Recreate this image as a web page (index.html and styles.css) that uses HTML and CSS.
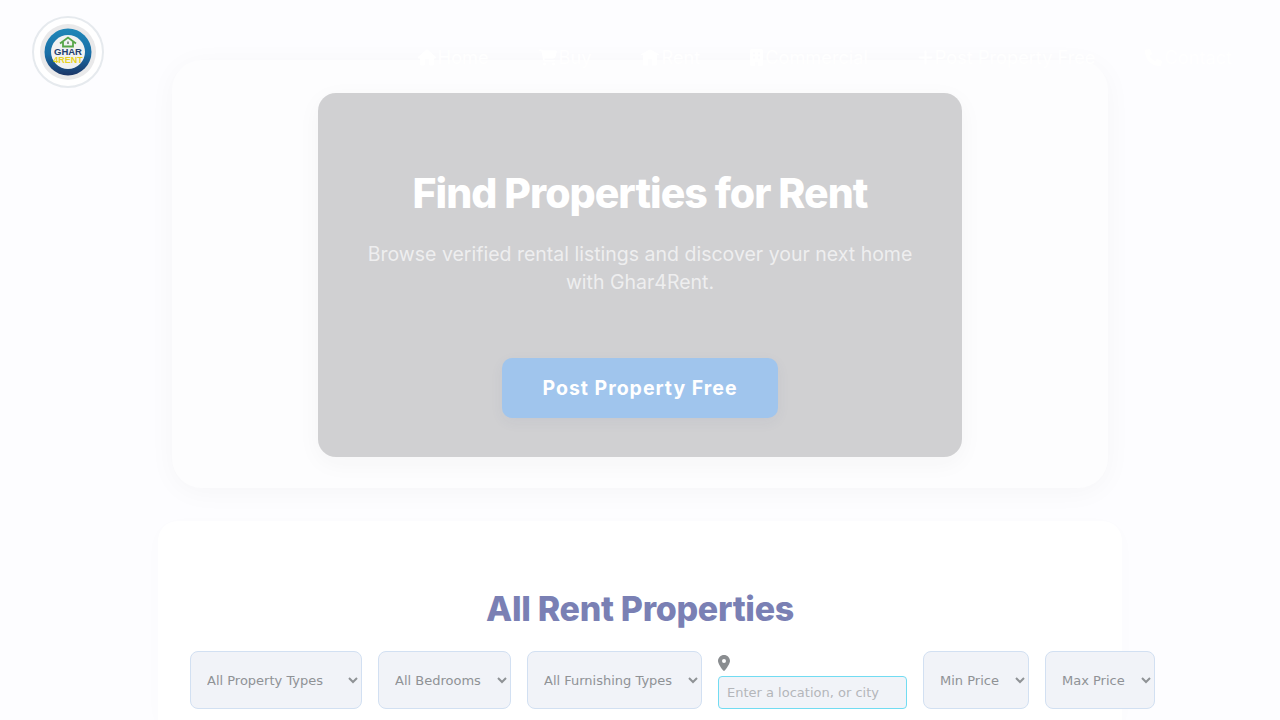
FILE: index.html
```html
<!DOCTYPE html>
<html lang="en">

<head>
    <meta charset="UTF-8">
    <meta name="viewport" content="width=device-width, initial-scale=1.0">
    <title>Ghar4Rent</title>
    <link rel="stylesheet" href="styles.css">
</head>

<body>
    <header class="header">
        <a class="logo" href="#">
            <svg width="72" height="72" viewBox="0 0 72 72">
                <defs>
                    <linearGradient id="ring" x1="0" y1="0" x2="0" y2="1">
                        <stop offset="0" stop-color="#1f87b8" />
                        <stop offset="0.55" stop-color="#1a6ea6" />
                        <stop offset="1" stop-color="#1b3566" />
                    </linearGradient>
                </defs>
                <circle cx="36" cy="36" r="35" fill="#fff" stroke="#e6eaee" stroke-width="2" />
                <circle cx="36" cy="36" r="28" fill="#e9e9ea" />
                <circle cx="36" cy="36" r="23.500" fill="url(#ring)" />
                <circle cx="36" cy="36" r="17" fill="#f1f2f2" />
                <path d="M28 27.500 36 21.500 44 27.500M31 26V30.500H41V26" fill="none" stroke="#56a548" stroke-width="1.800" />
                <rect x="35" y="25.500" width="2" height="2.500" fill="#8a9a8c" />
                <text x="36" y="39" class="logo-top">GHAR</text>
                <text x="36" y="46.500" class="logo-bottom">4RENT</text>
            </svg>
        </a>
        <nav class="nav">
            <a href="#">
                <svg width="18" height="17" viewBox="0 0 576 512"><path d="M575.800 255.500c0 18-15 32.100-32 32.100h-32l.7 160.200c0 2.700-.2 5.400-.5 8.100V472c0 22.100-17.900 40-40 40H392c-22.100 0-40-17.900-40-40V352c0-17.700-14.300-32-32-32h-64c-17.700 0-32 14.300-32 32v120c0 22.100-17.900 40-40 40H104c-22.100 0-40-17.900-40-40V287.600H32c-18 0-32-14-32-32.100 0-9 3-17 10-24L266.400 8c7-7 15-8 22-8s15 2 21 7l255.400 224.500c8 7 12 15 11 24z" /></svg>
                Home
            </a>
            <a href="#">
                <svg width="18" height="17" viewBox="0 0 576 512"><path d="M0 24C0 10.700 10.700 0 24 0h45.500c22 0 41.500 12.800 50.600 32h411c26.300 0 45.500 25 38.600 50.400l-41 152.300c-8.500 31.400-37 53.300-69.500 53.300H170.700l5.400 28.500c2.200 11.300 12.100 19.500 23.600 19.500H488c13.300 0 24 10.700 24 24s-10.700 24-24 24H199.700c-34.600 0-64.300-24.600-70.700-58.500L77.400 54.500c-.7-3.800-4-6.500-7.900-6.500H24C10.700 48 0 37.300 0 24zm128 440a48 48 0 1 1 96 0 48 48 0 1 1-96 0zm336-48a48 48 0 1 1 0 96 48 48 0 1 1 0-96z" /></svg>
                Buy
            </a>
            <a href="#">
                <svg width="18" height="17" viewBox="0 0 576 512"><path d="M280.400 3.100a16 16 0 0 1 15.200 0l272 144c7.800 4.100 10.800 13.800 6.700 21.600-2.900 5.400-8.400 8.500-14.300 8.500H512V480c0 17.700-14.300 32-32 32H352V352c0-17.700-14.300-32-32-32h-64c-17.700 0-32 14.300-32 32v160H96c-17.700 0-32-14.300-32-32V177.200H16c-5.900 0-11.400-3.100-14.300-8.500-4.100-7.800-1.100-17.500 6.700-21.600z" /></svg>
                Rent
            </a>
            <a href="#">
                <svg width="13" height="17" viewBox="0 0 384 512"><path d="M48 0C21.500 0 0 21.500 0 48v416c0 26.500 21.500 48 48 48h96v-80c0-26.500 21.500-48 48-48s48 21.500 48 48v80h96c26.500 0 48-21.500 48-48V48c0-26.500-21.500-48-48-48zm40 96h64v64H88zm144 0h64v64h-64zM88 224h64v64H88zm144 0h64v64h-64z" /></svg>
                Commercial
            </a>
            <a href="#">
                <svg width="15" height="17" viewBox="0 0 448 512"><path d="M256 80c0-17.700-14.300-32-32-32s-32 14.300-32 32v144H48c-17.700 0-32 14.300-32 32s14.300 32 32 32h144v144c0 17.700 14.300 32 32 32s32-14.300 32-32V288h144c17.700 0 32-14.300 32-32s-14.300-32-32-32H256z" /></svg>
                Post Property Free
            </a>
            <a href="#">
                <svg width="17" height="17" viewBox="0 0 512 512"><path d="M164.900 24.600c-7.700-18.600-28-28.500-47.400-23.200l-88 24C12.100 30.200 0 46 0 64c0 247.400 200.600 448 448 448 18 0 33.800-12.100 38.600-29.500l24-88c5.300-19.400-4.600-39.700-23.200-47.400l-96-40c-16.300-6.800-35.200-2.100-46.300 11.600L304.700 368C234.300 334.700 177.300 277.700 144 207.300l49.300-40.300c13.700-11.200 18.400-30 11.600-46.300z" /></svg>
                Contact
            </a>
        </nav>
    </header>

    <main class="page">
        <section class="hero">
            <div class="hero-box">
                <h1>Find Properties for Rent</h1>
                <p>Browse verified rental listings and discover your next home with Ghar4Rent.</p>
                <a class="post-btn" href="#">Post Property Free</a>
            </div>
        </section>

        <section class="listing">
            <h2>All Rent Properties</h2>
            <form class="filters">
                <select class="filter type-filter">
                    <option>All Property Types</option>
                </select>
                <select class="filter bed-filter">
                    <option>All Bedrooms</option>
                </select>
                <select class="filter furnish-filter">
                    <option>All Furnishing Types</option>
                </select>
                <div class="location">
                    <svg width="12" height="16" viewBox="0 0 384 512"><path d="M215.700 499.200C267 435 384 279.400 384 192 384 86 298 0 192 0S0 86 0 192c0 87.400 117 243 168.300 307.200 12.300 15.300 35.100 15.300 47.400 0zM192 128a64 64 0 1 1 0 128 64 64 0 1 1 0-128z" /></svg>
                    <input type="text" placeholder="Enter a location, or city">
                </div>
                <select class="filter min-filter">
                    <option>Min Price</option>
                </select>
                <select class="filter max-filter">
                    <option>Max Price</option>
                </select>
            </form>
        </section>
    </main>
</body>

</html>
```

FILE: styles.css
```css
* {
    margin: 0;
    padding: 0;
    box-sizing: border-box;
}

html,
body {
    height: 720px;
    overflow: hidden;
}

body {
    background-color: #fdfdff;
    font-family: "Inter", "Liberation Sans", sans-serif;
}

/* header lies over the hero */
.header {
    position: absolute;
    top: 16px;
    left: 32px;
    right: 48px;
    z-index: 2;
    display: flex;
    justify-content: space-between;
}

.logo {
    display: block;
    width: 72px;
    height: 72px;
}

.logo-top,
.logo-bottom {
    font-family: "Liberation Sans", sans-serif;
    font-weight: 700;
    text-anchor: middle;
}

.logo-top {
    font-size: 9.500px;
    fill: #23406e;
}

.logo-bottom {
    font-size: 9px;
    fill: #e8d21f;
}

.nav {
    display: flex;
    gap: 50px;
    align-items: flex-start;
    padding-top: 30px;
}

.nav a {
    display: flex;
    align-items: center;
    gap: 2px;
    color: #fff;
    font-size: 18.200px;
    line-height: 22px;
    text-decoration: none;
}

.nav svg {
    fill: #fff;
}

.page {
    display: flex;
    flex-direction: column;
    align-items: center;
    padding-top: 60px;
}

.hero {
    display: flex;
    justify-content: center;
    width: 936px;
    height: 428px;
    padding-top: 33px;
    background-color: #fdfdfe;
    border-radius: 30px;
    box-shadow: 0 4px 28px rgba(0, 0, 0, .035);
}

.hero-box {
    display: flex;
    flex-direction: column;
    align-items: center;
    width: 644px;
    height: 364px;
    padding: 76px 40px 0;
    background-color: #d0d0d2;
    border-radius: 18px;
    box-shadow: 0 6px 24px rgba(40, 40, 60, .04);
    text-align: center;
}

.hero-box h1 {
    color: #fff;
    font-size: 41px;
    font-weight: 800;
    line-height: 48px;
    letter-spacing: -1px;
}

.hero-box p {
    margin-top: 23px;
    color: #eeeeef;
    font-size: 19.500px;
    line-height: 28px;
}

.post-btn {
    display: block;
    width: 276px;
    height: 60px;
    margin-top: 62px;
    background-color: #a0c5ed;
    border-radius: 10px;
    box-shadow: 0 4px 14px rgba(60, 90, 130, .06);
    color: #fff;
    font-size: 19.500px;
    font-weight: 700;
    line-height: 60px;
    letter-spacing: 1px;
    text-decoration: none;
}

.listing {
    width: 964px;
    height: 199px;
    margin-top: 33px;
    padding: 66px 32px 0;
    background-color: #fff;
    border-radius: 20px 20px 0 0;
    box-shadow: 0 4px 20px rgba(0, 0, 0, .015);
}

.listing h2 {
    color: #7a80b4;
    font-size: 34px;
    font-weight: 800;
    line-height: 44px;
    letter-spacing: -.3px;
    text-align: center;
}

.filters {
    display: flex;
    gap: 16px;
    width: 965px;
    margin-top: 20px;
}

.filter {
    height: 58px;
    padding: 0 12px;
    background-color: #f1f3f8;
    border: 1px solid #d2e0f2;
    border-radius: 8px;
    color: #8f9296;
    font-family: "DejaVu Sans", sans-serif;
    font-size: 13px;
}

.type-filter {
    width: 172px;
}

.bed-filter {
    width: 133px;
}

.furnish-filter {
    width: 175px;
}

.min-filter {
    width: 106px;
}

.max-filter {
    width: 110px;
}

.location {
    display: flex;
    flex-direction: column;
    justify-content: space-between;
    align-items: flex-start;
    width: 189px;
    height: 58px;
    padding-top: 4px;
}

.location svg {
    fill: #8a8d90;
}

.location input {
    width: 189px;
    height: 33px;
    padding: 0 8px;
    background-color: #f1f3f8;
    border: 1px solid #72dcf2;
    border-radius: 4px;
    font-family: "DejaVu Sans", sans-serif;
    font-size: 13px;
}

.location input::placeholder {
    color: #b4b6ba;
}
```
